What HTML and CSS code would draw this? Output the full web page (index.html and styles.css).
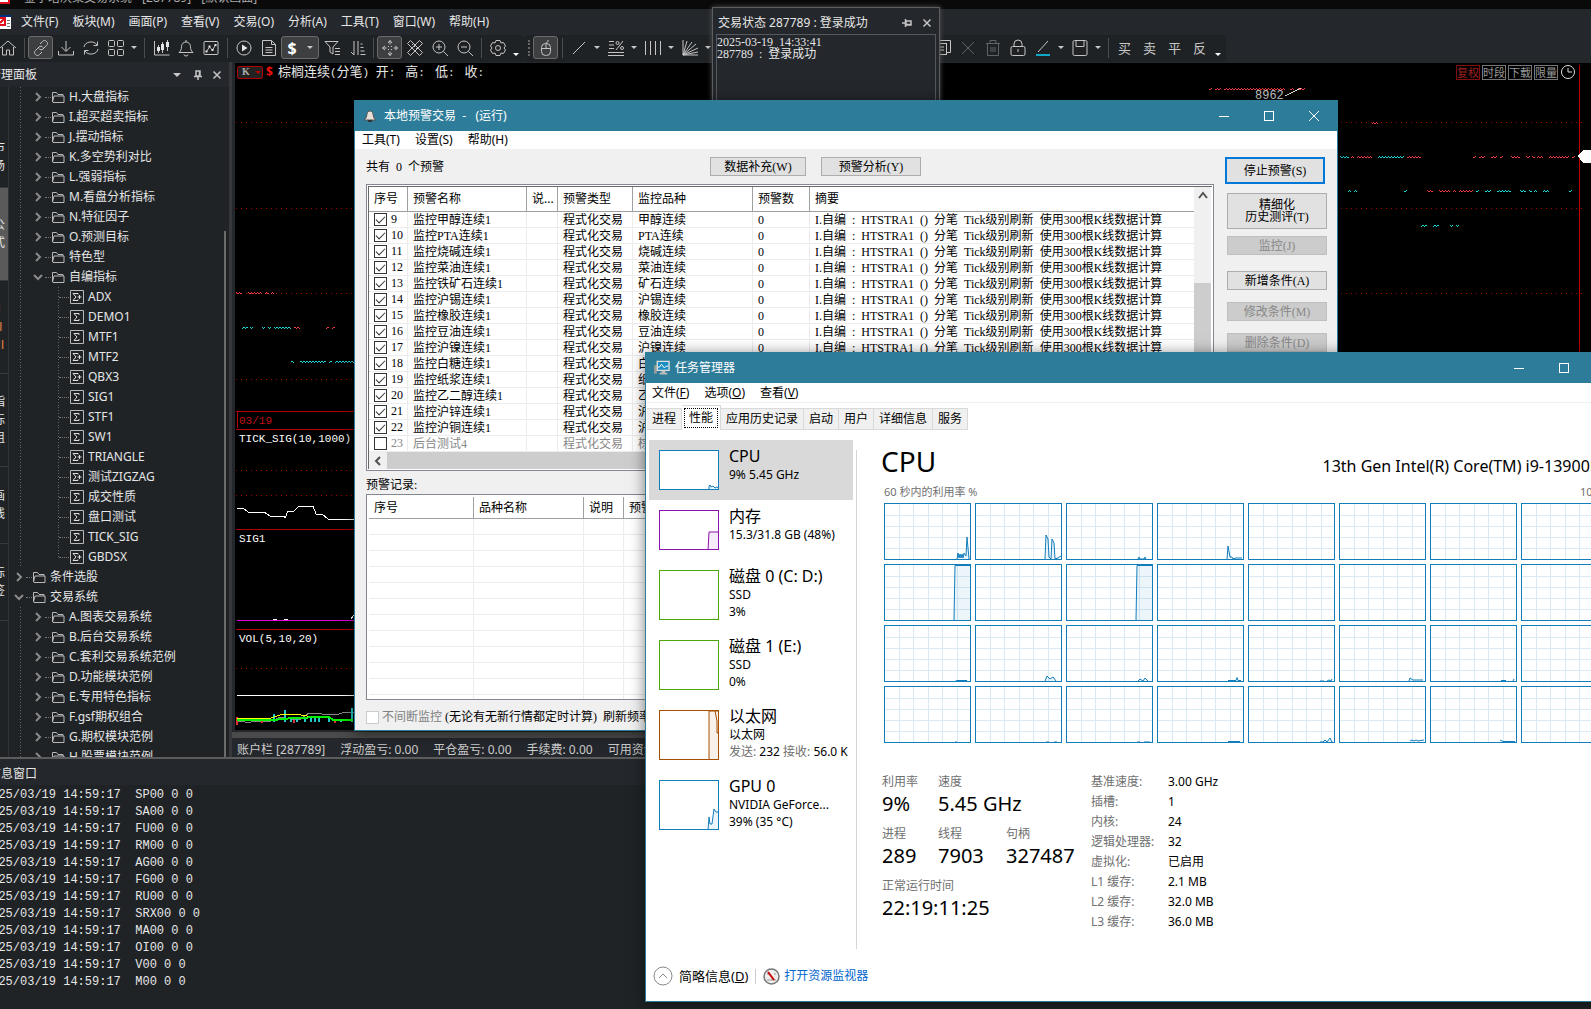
FILE: index.html
```html
<!DOCTYPE html>
<html lang="zh-CN">

<head>
    <meta charset="UTF-8">
    <meta name="viewport" content="width=device-width, initial-scale=1.0">
    <title>本地预警交易</title>
    <link rel="stylesheet" href="styles.css">
</head>

<body>
    <!-- icon sprite -->
    <svg class="sprite" aria-hidden="true">
        <symbol id="home" viewBox="0 0 18 18"><path d="M1 9 9 2l8 7M3.500 8v8h4v-5h3v5h4V8" /></symbol>
        <symbol id="link" viewBox="0 0 18 18"><path d="M8 5l2.500-2.500a2.500 2.500 0 0 1 4 0 2.500 2.500 0 0 1 0 4L11 10a2.500 2.500 0 0 1-4-.5M10 13l-2.500 2.500a2.500 2.500 0 0 1-4 0 2.500 2.500 0 0 1 0-4L7 8a2.500 2.500 0 0 1 4 .5" /></symbol>
        <symbol id="download" viewBox="0 0 18 18"><path d="M9 2v10M4.500 8 9 12.500 13.500 8M1.500 12v4h15v-4" /></symbol>
        <symbol id="refresh" viewBox="0 0 18 18"><path d="M2 8a7 6 0 0 1 13-2M15.500 2.500V6.500H11.500M16 10a7 6 0 0 1-13 2M2.500 15.500V11.500h4" /></symbol>
        <symbol id="grid" viewBox="0 0 18 18"><rect x="1.500" y="1.500" width="6" height="6" rx="1" /><rect x="10.500" y="1.500" width="6" height="6" rx="1" /><rect x="1.500" y="10.500" width="6" height="6" rx="1" /><rect x="10.500" y="10.500" width="6" height="6" rx="1" /></symbol>
        <symbol id="candle" viewBox="0 0 18 18"><path d="M2.500 2v14h15M6.500 6v8M10.500 3v11M15.500 1v11" /><path class="solid" d="M5 8h3v4H5zM9 5h3v6H9zM14 3h3v5h-3z" /></symbol>
        <symbol id="bell" viewBox="0 0 18 18"><path d="M2 13.500h14c-2-2-2.500-3-2.500-6a4.500 4.500 0 0 0-9 0c0 3-.5 4-2.500 6zM7 15.500a2 1.500 0 0 0 4 0M9 1v2" /></symbol>
        <symbol id="chart" viewBox="0 0 18 18"><rect x="2" y="2.500" width="14" height="13" rx="1" /><path d="M4.500 12.500 7.500 8l3 3L13.500 6" /><path class="solid" d="M6.500 6.500h2v2h-2zM9.500 10h2v2h-2zM12.500 5h2v2h-2zM3.500 11.500h2v2h-2z" /></symbol>
        <symbol id="play" viewBox="0 0 18 18"><circle cx="9" cy="9" r="7" /><path class="solid" d="M7 5.500 12.500 9 7 12.500z" /></symbol>
        <symbol id="doc" viewBox="0 0 18 18"><path d="M2.500 1.500h9l4 4v11h-13zM11.500 1.500v4h4M5.500 8.500h7M5.500 11h7M5.500 13.500h7" /></symbol>
        <symbol id="filter" viewBox="0 0 18 18"><path d="M2 2.500h13L10 8v7l-3-2V8zM12 9.500h5M12 12.500h5M12 15.500h5" /></symbol>
        <symbol id="sort" viewBox="0 0 18 18"><path d="M6 2v14L3 13M10 16V2M12.500 5h2M12.500 8.500h3M12.500 12h4M12.500 15.500h5" /></symbol>
        <symbol id="move" viewBox="0 0 18 18"><path d="M9 1.500v4M9 12.500v4M1.500 9h4M12.500 9h4M7 4l2-2.500L11 4M7 14l2 2.500 2-2.500M4 7 1.500 9 4 11M14 7l2.500 2L14 11M7 7l1 1M11 7l-1 1M7 11l1-1M11 11l-1-1" /></symbol>
        <symbol id="tools" viewBox="0 0 18 18"><path d="M4.500 1.500 16.500 13.500l-3 3L1.500 4.500zM13.500 1.500l3 3-12 12-3-3zM6 6l1.500-1.500M8 8l1.500-1.500M10 10l1.500-1.500" /></symbol>
        <symbol id="zoomin" viewBox="0 0 18 18"><circle cx="8" cy="8" r="6" /><path d="M12.500 12.500 17 17M5 8h6M8 5v6" /></symbol>
        <symbol id="zoomout" viewBox="0 0 18 18"><circle cx="8" cy="8" r="6" /><path d="M12.500 12.500 17 17M5 8h6" /></symbol>
        <symbol id="gear" viewBox="0 0 18 18"><circle cx="9" cy="9" r="2.500" /><path d="M7 1.500h4l1 2.500 2.500-.5 2 3.500-1.500 2 1.500 2-2 3.500L12 14l-1 2.500H7L6 14l-2.500.5-2-3.500L3 9 1.500 7l2-3.500L6 4z" /></symbol>
        <symbol id="mouse" viewBox="0 0 18 18"><rect x="4.500" y="4.500" width="9" height="12" rx="4" /><path d="M4.500 9.500h9M9 5v4.500M9 5c0-3 3-1 2-4" /></symbol>
        <symbol id="line" viewBox="0 0 18 18"><path d="M3 15 15 3" /></symbol>
        <symbol id="fib" viewBox="0 0 18 18"><path d="M2 2.500h5M2 6h5M2 9.500h5M1 13.500h16M1 16.500h16M16 2 9 11" /><circle cx="10.500" cy="4" r="1.500" /><circle cx="15" cy="9" r="1.500" /></symbol>
        <symbol id="bars" viewBox="0 0 18 18"><path d="M1.500 2v14M6.500 2v14M11.500 2v14M16.500 2v14" /></symbol>
        <symbol id="fan" viewBox="0 0 18 18"><path d="M2 1v15h15M2 16 6 2M2 16 11 3M2 16 15 5M2 16 17 9M2 16l15-3" /></symbol>
        <symbol id="copy" viewBox="0 0 18 18"><rect x="1.500" y="4.500" width="11" height="11" /><path d="M5 4.500v-3h11.500v12H12.500M4 8h6M4 11h6" /></symbol>
        <symbol id="cross" viewBox="0 0 18 18"><path d="M3 3l12 12M15 3 3 15" /></symbol>
        <symbol id="trash" viewBox="0 0 18 18"><path d="M2 4.500h14M6 4.500v-3h6v3M3.500 4.500v12h11v-12M7 8v5M9 8v5M11 8v5" /></symbol>
        <symbol id="lock" viewBox="0 0 18 18"><rect x="2" y="7.500" width="14" height="9" rx="1.500" /><path d="M5 7.500V5a4 4 0 0 1 8 0v2.500M9 10v3" /></symbol>
        <symbol id="pen" viewBox="0 0 18 18"><path d="M4 13 14 2" /><path class="cyan" d="M2 16h14" /></symbol>
        <symbol id="save" viewBox="0 0 18 18"><rect x="2" y="1.500" width="14" height="15" rx="1.500" /><path d="M5 1.500v6h8v-6" /></symbol>
        <symbol id="pin" viewBox="0 0 10 10"><path d="M3 1h4v5H3zM1 6.500h8M5 6.500V10M6.500 1v5" /></symbol>
        <symbol id="close" viewBox="0 0 10 10"><path d="M1.500 1.500l7 7M8.500 1.500l-7 7" /></symbol>
        <symbol id="folder" viewBox="0 0 14 14"><path d="M1.500 12V2.500h4l1.500 2h5V6M1.500 12l1.500-6h10v6.500H2z" /></symbol>
        <symbol id="sigma" viewBox="0 0 14 14"><path d="M.5.5h13v13H.5z" /><path class="sig" d="M9 5V3.500H4L7 7l-3 3.500h5V9" /></symbol>
        <symbol id="sigmaplus" viewBox="0 0 14 14"><path d="M.5.5h13v13H.5z" /><path class="sig" d="M8 4.500V3.500H3L6 7l-3 3.500h5v-1M7.500 7h4M9.500 5v4" /></symbol>
        <symbol id="right" viewBox="0 0 10 10"><path d="M3 1l4 4-4 4" /></symbol>
        <symbol id="down" viewBox="0 0 10 10"><path d="M1 3l4 4 4-4" /></symbol>
    </svg>

    <div class="app">
        <header class="titlebar">
            <span class="logo"></span>
            <span class="app-title">金字塔决策交易系统 - [287789] - [默认画面]</span>
        </header>
        <nav class="menubar">
            <svg class="doc-icon" width="11" height="14" viewBox="0 0 11 14"><path fill="#fff" d="M0 0h11v14H0z" /><path fill="#003080" d="M0 0h11v2H0z" /><path fill="none" stroke="#e01020" stroke-width="2" d="M0 3h5v7H0M0 8l4-4" /><path stroke="#777" d="M7 5.500h3M7 8.500h3M7 11.500h3" /></svg>
            <a href="#">文件(F)</a><a href="#">板块(M)</a><a href="#">画面(P)</a><a href="#">查看(V)</a><a href="#">交易(O)</a><a href="#">分析(A)</a><a href="#">工具(T)</a><a href="#">窗口(W)</a><a href="#">帮助(H)</a>
        </nav>
        <div class="toolbar" id="toolbar"></div>

        <div class="main">
            <aside class="panel">
                <div class="panel-head">
                    <span class="panel-title">管理面板</span>
                    <i class="caret large"></i>
                    <svg class="ico small"><use href="#pin" /></svg>
                    <svg class="ico small"><use href="#close" /></svg>
                </div>
                <div class="panel-body">
                    <div class="strip">
                        <div class="strip-tab t1"><span>市场</span></div>
                        <div class="strip-tab t2 on"><span>公式</span></div>
                        <div class="strip-tab t2 hot"><span>ⅠⅡⅢ</span></div>
                        <div class="strip-tab t2"><span>指标组</span></div>
                        <div class="strip-tab t3"><span>画线</span></div>
                        <div class="strip-tab t3"><span>标签</span></div>
                    </div>
                    <ul class="tree" id="tree"></ul>
                    <div class="tree-scroll"><div class="tree-thumb"></div></div>
                </div>
            </aside>

            <section class="view">
                <div class="chart">
                    <svg class="plot" id="plot">
                        <defs>
                            <pattern id="zr" width="3" height="2" patternUnits="userSpaceOnUse"><path d="M0 0h1v1H0zM1 1h1v1H1zM2 0h1v1H2z" fill="#f03c3c" /></pattern>
                            <pattern id="zc" width="3" height="2" patternUnits="userSpaceOnUse"><path d="M0 0h1v1H0zM1 1h1v1H1zM2 0h1v1H2z" fill="#20d8d8" /></pattern>
                        </defs>
                    </svg>
                    <div class="chart-head">
                        <span class="kbox"><b>K</b><i></i></span>
                        <span class="dollar">$</span>
                        <span class="sim13">棕榈连续<span class="en13">(</span>分笔<span class="en13">) </span>开<span class="en13">: </span> 高<span class="en13">: </span> 低<span class="en13">: </span> 收<span class="en13">:</span></span>
                        <span class="tags"><b class="red">复权</b><b>时段</b><b>下载</b><b>限量</b><svg width="16" height="16"><circle cx="8" cy="8" r="6.500" /><path d="M8 4v4h4" /></svg></span>
                    </div>
                </div>
                <div class="hbar"></div>
                <div class="status"><span>账户栏 [287789]</span><span>浮动盈亏: 0.00</span><span>平仓盈亏: 0.00</span><span>手续费: 0.00</span><span>可用资金: 0.00</span></div>
            </section>
        </div>

        <section class="message">
            <div class="message-head"><span>信息窗口</span></div>
            <div class="log" id="log"></div>
        </section>
    </div>

    <!-- trade state popup -->
    <div class="popup">
        <div class="popup-head">
            <span>交易状态 287789 : 登录成功</span>
            <svg class="ico small turn"><use href="#pin" /></svg>
            <svg class="ico small"><use href="#close" /></svg>
        </div>
        <div class="popup-body">
            <div class="sim">2025-03-19 14:33:41</div>
            <div class="sim">287789 : 登录成功</div>
        </div>
    </div>

    <!-- alert dialog -->
    <div class="win alert">
        <div class="win-title">
            <svg width="16" height="14" viewBox="0 0 16 14"><path fill="#e8e0d8" stroke="#555" d="M1 11c2-1 2.500-3 3-6 .5-4 5.500-4 6 0 .5 3 1 5 3 6z" /><path fill="#333" d="M5 11h4v2H5z" /></svg>
            <span>本地预警交易 &nbsp;- &nbsp;&nbsp;(运行)</span>
            <div class="caption"><button aria-label="最小化"><i class="min"></i></button><button aria-label="最大化"><i class="max"></i></button><button aria-label="关闭"><svg width="12" height="12"><path d="M1 1l10 10M11 1 1 11" /></svg></button></div>
        </div>
        <nav class="win-menu"><a href="#">工具(T)</a><a href="#">设置(S)</a><a href="#">帮助(H)</a></nav>
        <div class="alert-body">
            <div class="alert-left">
                <div class="alert-top">
                    <span class="sim count">共有 0 个预警</span>
                    <button class="btn sim w">数据补充(W)</button>
                    <button class="btn sim">预警分析(Y)</button>
                </div>
                <div class="list">
                    <div class="list-row">
                        <table class="grid rules">
                            <colgroup><col class="c1"><col class="c2"><col class="c3"><col class="c4"><col class="c5"><col class="c6"><col></colgroup>
                            <thead><tr><th>序号</th><th>预警名称</th><th>说...</th><th>预警类型</th><th>监控品种</th><th>预警数</th><th>摘要</th></tr></thead>
                            <tbody id="rules"></tbody>
                        </table>
                        <div class="vscroll"><svg width="10" height="10"><path d="M1 7l4-5 4 5" /></svg><div class="vthumb"></div></div>
                    </div>
                    <div class="hscroll"><svg width="10" height="10"><path d="M7 1 3 5l4 4" /></svg><div class="hthumb"></div></div>
                </div>
                <div class="sim record-label">预警记录:</div>
                <div class="list single">
                    <table class="grid">
                        <colgroup><col class="r1"><col class="r2"><col class="r3"><col></colgroup>
                        <thead><tr><th>序号</th><th>品种名称</th><th>说明</th><th>预警时间</th></tr></thead>
                        <tbody id="records"></tbody>
                    </table>
                </div>
                <div class="keep"><input type="checkbox" id="keep" disabled><label for="keep">不间断监控</label><span class="sim">(无论有无新行情都定时计算) 刷新频率</span></div>
            </div>
            <div class="side">
                <button class="btn sim primary">停止预警(S)</button>
                <button class="btn tall"><span class="sim">精细化</span><br><span class="sim">历史测评(T)</span></button>
                <button class="btn sim" disabled>监控(J)</button>
                <button class="btn sim add">新增条件(A)</button>
                <button class="btn sim edit" disabled>修改条件(M)</button>
                <button class="btn sim edit" disabled>删除条件(D)</button>
            </div>
        </div>
    </div>

    <!-- task manager -->
    <div class="win task">
        <div class="win-title">
            <svg width="16" height="16" viewBox="0 0 17 16"><path fill="#999" d="M0 5h3v9H0z" /><path fill="#5c5" d="M1 6h1v1H1z" /><path fill="#1b8fc4" stroke="#ddd" stroke-width="1.500" d="M3.500 1h12.500v9.500H3.500z" /><path fill="none" stroke="#fff" d="M4 7h2l2-3 3 4 2-2h2" /><path fill="#bbb" d="M8 11h4v2h2v2H6v-2h2z" /></svg>
            <span>任务管理器</span>
            <div class="caption"><button aria-label="最小化"><i class="min"></i></button><button aria-label="最大化"><i class="max"></i></button><button aria-label="关闭"><svg width="12" height="12"><path d="M1 1l10 10M11 1 1 11" /></svg></button></div>
        </div>
        <nav class="win-menu"><a href="#">文件(<u>F</u>)</a><a href="#">选项(<u>O</u>)</a><a href="#">查看(<u>V</u>)</a></nav>
        <div class="tabs"><button>进程</button><button class="on"><span>性能</span></button><button>应用历史记录</button><button>启动</button><button>用户</button><button>详细信息</button><button>服务</button></div>
        <div class="task-body">
            <ul class="devices">
                <li class="on"><svg class="thumb blue"><path d="M49 39v-4l1-1 1 2 2-1 2 2 2-1 2 1v2z" /></svg><div><h4>CPU</h4><p>9% 5.45 GHz</p></div></li>
                <li><svg class="thumb purple"><path d="M48 39 49 21h10v18z" /></svg><div><h4>内存</h4><p>15.3/31.8 GB (48%)</p></div></li>
                <li class="tallrow"><svg class="thumb green"><path d="M52 49l2-1 2 1 2-1" /></svg><div><h4>磁盘 0 (C: D:)</h4><p>SSD</p><p>3%</p></div></li>
                <li class="tallrow"><svg class="thumb green"></svg><div><h4>磁盘 1 (E:)</h4><p>SSD</p><p>0%</p></div></li>
                <li class="tallrow"><svg class="thumb orange"><path d="M49 49V0h10v49z" /><path d="M55 0l2 10v12h2" /></svg><div><h4>以太网</h4><p>以太网</p><p><em>发送:</em> 232 <em>接收:</em> 56.0 K</p></div></li>
                <li class="tallrow"><svg class="thumb blue"><path d="M48 49l1-13 1 7h2l2-15 2 3h3v18z" /></svg><div><h4>GPU 0</h4><p>NVIDIA GeForce...</p><p>39% (35 °C)</p></div></li>
            </ul>
            <section class="detail">
                <div class="detail-head"><h1>CPU</h1><span>13th Gen Intel(R) Core(TM) i9-13900KF</span></div>
                <div class="detail-sub"><span>60 秒内的利用率 %</span><span>100%</span></div>
                <div class="cores" id="cores"></div>
                <div class="stats">
                    <div class="figures">
                        <dl><dt>利用率</dt><dd>9%</dd></dl><dl class="wide"><dt>速度</dt><dd>5.45 GHz</dd></dl>
                        <dl><dt>进程</dt><dd>289</dd></dl><dl><dt>线程</dt><dd>7903</dd></dl><dl><dt>句柄</dt><dd>327487</dd></dl>
                        <dl class="whole"><dt>正常运行时间</dt><dd>22:19:11:25</dd></dl>
                    </div>
                    <dl class="specs">
                        <dt>基准速度:</dt><dd>3.00 GHz</dd>
                        <dt>插槽:</dt><dd>1</dd>
                        <dt>内核:</dt><dd>24</dd>
                        <dt>逻辑处理器:</dt><dd>32</dd>
                        <dt>虚拟化:</dt><dd>已启用</dd>
                        <dt>L1 缓存:</dt><dd>2.1 MB</dd>
                        <dt>L2 缓存:</dt><dd>32.0 MB</dd>
                        <dt>L3 缓存:</dt><dd>36.0 MB</dd>
                    </dl>
                </div>
            </section>
        </div>
        <footer class="task-foot">
            <button class="less"><svg width="20" height="20"><circle cx="10" cy="10" r="9" /><path d="M6 12l4-4 4 4" /></svg>简略信息(<u>D</u>)</button>
            <span class="bar"></span>
            <svg width="17" height="17" viewBox="0 0 17 17"><circle cx="8.500" cy="8.500" r="7.500" fill="#eee" stroke="#777" stroke-width="1.500" /><path stroke="#999" d="M4 6h2M11 6h2M4 12h9" /><path stroke="#c00" stroke-width="2" d="M5 4l6 8" /></svg>
            <a href="#">打开资源监视器</a>
        </footer>
    </div>

    <script src="script.js"></script>
</body>

</html>
```
FILE: styles.css
```css
* {
    box-sizing: border-box;
}

body {
    margin: 0;
    height: 100vh;
    overflow: hidden;
    position: relative;
    background: #1d1f22;
    font-family: "Noto Sans", "Noto Sans CJK SC", sans-serif;
    font-size: 12px;
    line-height: 16px;
    color: #e6e6e6;
}

ul, dl, dd, h1, h4, p {
    margin: 0;
    padding: 0;
    list-style: none;
    font-weight: normal;
}

a {
    color: inherit;
    text-decoration: none;
}

button {
    font: inherit;
    color: inherit;
    background: none;
    border: 0;
    padding: 0;
}

em {
    font-style: normal;
    color: #707070;
}

.sprite {
    display: none;
}

/* song style text */
.sim {
    font-size: 12px;
}

.en {
    font-family: "Liberation Serif", serif;
    line-height: 1px;
    white-space: pre;
}

.sim13 {
    font-size: 13px;
    white-space: pre;
}

.en13 {
    font-family: "Liberation Mono", monospace;
    font-size: 11px;
}

.ico {
    width: 18px;
    height: 18px;
    fill: none;
    stroke: #c4c4c4;
    flex: none;
}

.ico.small {
    width: 10px;
    height: 10px;
    stroke-width: 1.5;
}

.turn {
    transform: rotate(90deg);
}

.solid {
    fill: #e6e6e6;
    stroke: none;
}

.cyan {
    stroke: #10a8c8;
    stroke-width: 2;
}

/* Main application */
.app {
    height: 100vh;
    display: flex;
    flex-direction: column;
    background: #24272c;
}

.titlebar {
    height: 9px;
    flex: none;
    background: #0a0a0a;
    display: flex;
    align-items: flex-end;
    overflow: hidden;
    padding-bottom: 5px;
    gap: 14px;
}

.logo {
    width: 10px;
    height: 12px;
    background: #fff;
    border: 2px solid #e01020;
    border-left: 0;
}

.app-title {
    line-height: 12px;
    font-size: 12px;
    color: #aaa;
}

.menubar {
    height: 26px;
    flex: none;
    display: flex;
    align-items: center;
}

.menubar a {
    margin-left: 14px;
}

.doc-icon {
    margin-right: -4px;
}

.toolbar {
    height: 27px;
    flex: none;
    display: flex;
    align-items: center;
    margin-left: -5px;
}

.group {
    display: flex;
    align-items: center;
    height: 27px;
    background: #1f2225;
    border-radius: 4px;
    padding: 0 2px 2px 0;
}

.tool {
    width: 25px;
    height: 23px;
    display: flex;
    align-items: center;
    justify-content: center;
    font-size: 13px;
    color: #c8c8c8;
}

.tool.on {
    background: #3e3f40;
    border: 1px solid #6c6c6c;
    border-radius: 3px;
}

.tool.money {
    width: 38px;
    gap: 10px;
    font-size: 16px;
    font-weight: bold;
    color: #fff;
}

.tool.dim {
    opacity: 0.4;
}

.sep {
    width: 1px;
    height: 20px;
    background: #4a4d50;
    margin: 0 3px 0 4px;
}

.grip {
    border-left: 2px dotted #666;
    height: 16px;
    margin: 0 3px 0 4px;
}

.caret {
    border: 3px solid transparent;
    border-top: 3px solid #c8c8c8;
    border-bottom: 0;
    margin: 0 3px;
}

.caret.low {
    margin-top: 14px;
    border-top-color: #fff;
}

.caret.large {
    border-width: 4px 4px 0;
}

.tool .caret {
    margin: 0;
}

.tool-space {
    width: 216px;
}

.main {
    flex: 1;
    min-height: 0;
    display: flex;
}

.panel {
    width: 229px;
    flex: none;
    display: flex;
    flex-direction: column;
}

.panel-head {
    height: 25px;
    flex: none;
    display: flex;
    align-items: center;
    gap: 9px;
    padding-right: 7px;
}

.panel-title {
    margin-left: -11px;
    margin-right: auto;
}

.panel-body {
    flex: 1;
    min-height: 0;
    display: flex;
    background: #1f2326;
}

.strip {
    width: 9px;
    overflow: hidden;
    border-right: 1px solid #303337;
    padding-top: 40px;
    flex: none;
}

.strip-tab {
    height: 93px;
    border-bottom: 1px solid #36393d;
    display: flex;
    align-items: center;
    line-height: 18px;
}

.strip-tab span {
    width: 12px;
    flex: none;
    margin-left: -7px;
    word-break: break-all;
}

.strip-tab.t1 {
    height: 61px;
}

.strip-tab.t3 {
    height: 77px;
}

.strip-tab.on {
    background: #5a5a5a;
}

.strip-tab.hot {
    color: #e08040;
}

.tree {
    flex: 1;
    overflow: hidden;
    padding-left: 5px;
}

.tree li {
    height: 20px;
    display: flex;
    align-items: center;
    gap: 4px;
    white-space: nowrap;
}

.tree li svg {
    width: 14px;
    height: 14px;
    fill: none;
    stroke: #b8b8b8;
    flex: none;
}

.tree li .arrow {
    width: 10px;
    height: 10px;
    stroke: #8a8a8a;
    stroke-width: 2;
}

.tree .dots {
    width: 6px;
    border-top: 1px dotted #777;
    margin: 0 -4px 0 -2px;
}

.sig {
    stroke: #ddd;
}

.lv2 {
    padding-left: 19px;
    background: repeating-linear-gradient(#666 0 1px, transparent 1px 3px) 6px 0 / 1px 100% no-repeat;
}

.lv3 {
    padding-left: 45px;
    background:
        repeating-linear-gradient(#666 0 1px, transparent 1px 3px) 6px 0 / 1px 100% no-repeat,
        repeating-linear-gradient(#666 0 1px, transparent 1px 3px) 44px 0 / 1px 100% no-repeat;
}

.lv3:has(+ .lv1) {
    background:
        repeating-linear-gradient(#666 0 1px, transparent 1px 3px) 6px 0 / 1px 100% no-repeat,
        repeating-linear-gradient(#666 0 1px, transparent 1px 3px) 44px 0 / 1px 50% no-repeat;
}

.lv3 .dots {
    width: 10px;
    margin: 0 -3px 0 0;
}

.tree-scroll {
    width: 5px;
    display: flex;
    padding-top: 144px;
}

.tree-thumb {
    width: 2px;
    background: #6b6b6b;
}

.view {
    flex: 1;
    min-width: 0;
    display: flex;
    flex-direction: column;
    border-left: 3px solid #36383b;
    padding: 1px 0 0 3px;
}

.chart {
    flex: 1;
    background: #000;
    position: relative;
    overflow: hidden;
}

.plot {
    position: absolute;
    inset: 0;
    width: 100%;
    height: 100%;
    fill: none;
    shape-rendering: crispEdges;
    font-family: "Liberation Mono", monospace;
    font-size: 11px;
}

.chart-head {
    position: relative;
    display: flex;
    align-items: center;
    height: 18px;
    padding-left: 2px;
}

.kbox {
    display: flex;
    align-items: center;
    width: 26px;
    height: 13px;
    border: 1px solid #b00000;
    border-radius: 2px;
    background: #222;
    font-family: "Liberation Serif", serif;
    font-size: 10px;
    color: #aaa;
    padding-left: 4px;
}

.kbox i {
    border: 3px solid transparent;
    border-top-color: #b00000;
    border-bottom: 0;
    margin-left: 5px;
}

.dollar {
    color: #f01010;
    font-weight: bold;
    padding: 0 5px 0 3px;
}

.tags {
    margin-left: auto;
    margin-right: 15px;
    display: flex;
    align-items: center;
    gap: 2px;
    fill: none;
    stroke: #ddd;
}

.tags b {
    border: 1px solid #777;
    width: 24px;
    height: 15px;
    font-size: 11px;
    line-height: 13px;
    font-weight: normal;
    text-align: center;
    color: #999;
}

.tags b.red {
    color: #a02020;
    border-color: #801010;
}

.hbar {
    height: 6px;
    margin: 2px 0 0 -3px;
    background: #4a4a4a;
}

.status {
    height: 19px;
    flex: none;
    display: flex;
    align-items: center;
    gap: 15px;
    padding: 5px 0 0 2px;
    color: #ccc;
}

.message {
    height: 252px;
    flex: none;
    border-top: 2px solid #5c5c5c;
    background: #1f2326;
    overflow: hidden;
}

.message-head {
    height: 26px;
    background: #24272c;
    padding-top: 7px;
}

.message-head span {
    margin-left: -11px;
}

.log {
    font-family: "Liberation Mono", monospace;
    line-height: 17px;
    white-space: pre;
    margin-left: -16px;
    padding-top: 2px;
}

/* Popup */
.popup {
    position: absolute;
    left: 712px;
    top: 7px;
    width: 228px;
    height: 110px;
    background: #24272c;
    border: 1px solid #5e5e5e;
    box-shadow: 0 0 5px #555;
    padding: 0 3px;
    display: flex;
    flex-direction: column;
}

.popup-head {
    height: 26px;
    display: flex;
    align-items: center;
    gap: 10px;
    padding: 4px 4px 0 2px;
}

.popup-head span {
    margin-right: auto;
}

.popup-body {
    flex: 1;
    border: 1px solid #55585c;
    line-height: 12px;
    padding-top: 1px;
}

/* Windows */
.win {
    position: absolute;
    border: 1px solid #2d7d9a;
    color: #000;
    display: flex;
    flex-direction: column;
    box-shadow: 0 2px 14px rgba(0, 0, 0, 0.5);
}

.win-title {
    height: 30px;
    flex: none;
    background: #2d7d9a;
    color: #fff;
    display: flex;
    align-items: center;
    gap: 5px;
    padding: 0 1px 0 8px;
}

.caption {
    margin-left: auto;
    display: flex;
}

.caption button {
    width: 45px;
    height: 30px;
    display: flex;
    align-items: center;
    justify-content: center;
}

.caption svg {
    stroke: #fff;
}

.min {
    width: 10px;
    height: 1px;
    background: #fff;
}

.max {
    width: 10px;
    height: 10px;
    border: 1px solid #fff;
}

.win-menu {
    height: 18px;
    flex: none;
    background: #fff;
    display: flex;
    gap: 15px;
    padding: 1px 0 0 7px;
}

.alert {
    left: 354px;
    top: 100px;
    width: 984px;
    background: #f0f0f0;
}

.alert-body {
    display: flex;
    padding: 8px 10px 6px 11px;
    gap: 11px;
}

.alert-left {
    flex: 1;
    min-width: 0;
}

.alert-top {
    display: flex;
    height: 27px;
    gap: 15px;
}

.count {
    width: 329px;
    line-height: 20px;
}

.btn {
    height: 19px;
    width: 100px;
    border: 1px solid #adadad;
    background: #e1e1e1;
    line-height: 17px;
    white-space: nowrap;
}

.btn.w {
    width: 96px;
}

.btn:disabled {
    background: #ccc;
    border-color: #bfbfbf;
    color: #888;
}

.list {
    border: 1px solid #828790;
    box-shadow: inset 0 0 0 1px #fff, inset 2px 2px 0 #696969;
    padding: 2px;
    background: #fff;
    height: 287px;
}

.list.single {
    height: 206px;
    box-shadow: none;
    overflow: hidden;
}

.list-row {
    display: flex;
}

.grid {
    flex: 1;
    width: 100%;
    table-layout: fixed;
    border-collapse: separate;
    border-spacing: 0;
}

.grid th {
    height: 25px;
    padding: 0 0 0 5px;
    font-weight: normal;
    text-align: left;
    border-right: 1px solid #a0a0a0;
    border-bottom: 1px solid #a0a0a0;
    white-space: nowrap;
}

.grid td {
    height: 16px;
    padding: 0 0 0 5px;
    line-height: 15px;
    border-right: 1px solid #ececec;
    border-bottom: 1px solid #ececec;
    white-space: nowrap;
    overflow: hidden;
}

.grid th:last-child,
.grid td:last-child {
    border-right: 0;
}

.single th {
    height: 22px;
}

.rules td:first-child > label {
    display: flex;
    align-items: center;
    gap: 4px;
    height: 15px;
}

.off {
    color: #888;
}

.c1 { width: 39px; }
.c2 { width: 119px; }
.c3 { width: 31px; }
.c4 { width: 75px; }
.c5 { width: 120px; }
.c6 { width: 57px; }
.r1 { width: 105px; }
.r2 { width: 110px; }
.r3 { width: 40px; }

input[type="checkbox"] {
    appearance: none;
    width: 13px;
    height: 13px;
    margin: 0;
    border: 1px solid #333;
    background: #fff;
    flex: none;
}

input[type="checkbox"]:checked::after {
    content: "";
    display: block;
    width: 8px;
    height: 4px;
    margin: 2px 1px;
    border-left: 1px solid #333;
    border-bottom: 1px solid #333;
    transform: rotate(-45deg);
}

input[type="checkbox"]:disabled {
    border-color: #ccc;
}

.vscroll {
    width: 17px;
    background: #f0f0f0;
    display: flex;
    flex-direction: column;
    align-items: center;
    padding-top: 4px;
    gap: 82px;
}

.vscroll svg,
.hscroll svg {
    fill: none;
    stroke: #505050;
    stroke-width: 2;
    flex: none;
}

.vthumb {
    flex: 1;
    width: 17px;
    background: #cdcdcd;
}

.hscroll {
    height: 17px;
    background: #f0f0f0;
    display: flex;
    align-items: center;
    padding-left: 4px;
    gap: 4px;
    margin-right: 17px;
}

.hthumb {
    width: 600px;
    height: 17px;
    background: #cdcdcd;
}

.record-label {
    height: 23px;
    line-height: 27px;
}

.keep {
    display: flex;
    align-items: center;
    padding-top: 10px;
    height: 24px;
    gap: 3px;
    white-space: nowrap;
}

.keep label {
    color: #808080;
}

.side {
    width: 102px;
    flex: none;
    display: flex;
    flex-direction: column;
    align-items: flex-end;
}

.btn.primary {
    width: 100px;
    height: 27px;
    border: 2px solid #0078d7;
    margin: 0 2px 9px 0;
}

.btn.tall {
    height: 36px;
    line-height: 12px;
    margin-bottom: 7px;
}

.btn.add {
    margin: 16px 0 12px;
}

.btn.edit {
    margin-bottom: 12px;
}

/* Task manager */
.task {
    left: 645px;
    top: 352px;
    width: 988px;
    height: 650px;
    background: #fff;
}

.task .win-menu {
    padding: 2px 0 0 6px;
    height: 20px;
    border-bottom: 1px solid #f0f0f0;
}

.tabs {
    display: flex;
    align-items: flex-end;
    height: 27px;
    flex: none;
    padding-left: 1px;
    margin-bottom: 10px;
}

.tabs button {
    height: 22px;
    padding: 0 5px;
    background: #f0f0f0;
    border: 1px solid #d9d9d9;
    border-left: 0;
}

.tabs .on {
    height: 25px;
    background: #fff;
    padding: 0 2px;
    border-bottom: 0;
}

.tabs .on span {
    display: block;
    border: 1px dotted #000;
    padding: 1px 4px;
}

.task-body {
    flex: 1;
    display: flex;
    padding-left: 3px;
}

.devices {
    width: 208px;
    flex: none;
    margin-bottom: 52px;
    position: relative;
    overflow: hidden;
}

.devices::after {
    content: "";
    position: absolute;
    right: 0;
    top: 10px;
    bottom: 0;
    border-right: 1px solid #d5d5d5;
}

.devices li {
    display: flex;
    gap: 10px;
    height: 60px;
    padding: 7px 0 0 10px;
    width: 204px;
    white-space: nowrap;
}

.devices .tallrow {
    height: 70px;
}

.devices .on {
    background: #d9d9d9;
}

.devices h4 {
    font-size: 16px;
    line-height: 19px;
}

.devices p {
    line-height: 17px;
}

.thumb {
    width: 60px;
    height: 40px;
    flex: none;
    margin-top: 3px;
    border: 1px solid currentColor;
    background: #fff;
    stroke: currentColor;
    fill: currentColor;
    fill-opacity: 0.08;
}

.tallrow .thumb {
    height: 50px;
}

.blue { color: #117dbb; }
.purple { color: #8b12ae; }
.green { color: #4da60c; }
.orange { color: #a74f01; }

.detail {
    padding-left: 24px;
    width: 751px;
    flex: none;
}

.detail-head {
    display: flex;
    justify-content: space-between;
    align-items: baseline;
    height: 44px;
}

.detail-head h1 {
    font-size: 28px;
    line-height: 42px;
}

.detail-head span {
    font-size: 16px;
}

.detail-sub {
    display: flex;
    justify-content: space-between;
    font-size: 11px;
    line-height: 16px;
    color: #707070;
    padding: 0 0 3px 3px;
}

.cores {
    display: grid;
    grid-template-columns: repeat(8, 87px);
    gap: 4px;
    padding-left: 3px;
    margin-bottom: 31px;
}

.cores svg {
    width: 87px;
    height: 57px;
    border: 1px solid #117dbb;
    stroke: #117dbb;
    fill: none;
}

.cores .rule {
    stroke: #d9eaf4;
    shape-rendering: crispEdges;
}

.cores .load {
    fill: #117dbb;
    fill-opacity: 0.08;
}

.stats {
    display: flex;
    gap: 12px;
    padding-left: 1px;
}

.stats dt {
    color: #707070;
}

.figures {
    display: grid;
    grid-template-columns: 56px 68px 73px;
    grid-auto-rows: 52px;
}

.figures .wide {
    grid-column: span 2;
}

.figures .whole {
    grid-column: span 3;
}

.figures dd {
    font-size: 20px;
    line-height: 28px;
}

.specs {
    display: grid;
    grid-template-columns: 77px 100px;
    grid-auto-rows: 20px;
}

.task-foot {
    position: absolute;
    left: 7px;
    bottom: 15px;
    display: flex;
    align-items: center;
    gap: 7px;
}

.less {
    display: flex;
    align-items: center;
    font-size: 13px;
}

.less svg {
    fill: none;
    stroke: #888;
    margin-right: 6px;
}

.bar {
    height: 15px;
    border-left: 1px solid #ccc;
}

.task-foot a {
    color: #0066cc;
    margin-left: -3px;
}
```
FILE: script.js
```js
const icon = name => `<svg class="ico"><use href="#${name}" /></svg>`;

// latin runs are set in serif, with half-em spaces, next to the 12px chinese glyphs
const en = text => text.replace(/[\x20-\x7e]+/g, run => `<span class="en">${run.replace(/ /g, '\u2002')}</span>`);

document.querySelectorAll('.sim').forEach(el => {
    el.innerHTML = en(el.textContent);
});

// toolbar: "|" separator, "v" drop arrow, "_" low arrow, "*" pressed, "-" dimmed
const groups = [
    'home | *link download refresh grid v | candle bell chart | play doc $ filter sort | *move tools zoomin zoomout | gear _',
    ': *mouse | line v fib v bars v fan v ~ copy -cross -trash lock pen v save v | 买 卖 平 反 _'
];

function tool(key) {
    if (key === '|') return '<i class="sep"></i>';
    if (key === ':') return '<i class="grip"></i>';
    if (key === 'v') return '<i class="caret"></i>';
    if (key === '_') return '<i class="caret low"></i>';
    if (key === '~') return '<i class="tool-space"></i>';
    if (key === '$') return '<button class="tool on money">$<i class="caret"></i></button>';
    if (/[买卖平反]/.test(key)) return `<button class="tool">${key}</button>`;
    const name = key.replace(/^[*-]/, '');
    const state = key[0] === '*' ? ' on' : key[0] === '-' ? ' dim' : '';
    return `<button class="tool${state}" aria-label="${name}">${icon(name)}</button>`;
}

document.getElementById('toolbar').innerHTML = groups
    .map(g => `<div class="group">${g.split(' ').map(tool).join('')}</div>`).join('');

// formula tree
const tree = [
    ...['H.大盘指标', 'I.超买超卖指标', 'J.摆动指标', 'K.多空势利对比', 'L.强弱指标', 'M.看盘分析指标', 'N.特征因子', 'O.预测目标', '特色型'].map(t => [2, t]),
    [2, '自编指标', 'open'],
    [3, 'ADX', 'plus'], [3, 'DEMO1'], [3, 'MTF1'], [3, 'MTF2', 'plus'], [3, 'QBX3', 'plus'], [3, 'SIG1'], [3, 'STF1'], [3, 'SW1'],
    [3, 'TRIANGLE', 'plus'], [3, '测试ZIGZAG', 'plus'], [3, '成交性质'], [3, '盘口测试'], [3, 'TICK_SIG'], [3, 'GBDSX', 'plus'],
    [1, '条件选股'], [1, '交易系统', 'open'],
    ...['A.图表交易系统', 'B.后台交易系统', 'C.套利交易系统范例', 'D.功能模块范例', 'E.专用特色指标', 'F.gsf期权组合', 'G.期权模块范例', 'H.股票模块范例'].map(t => [2, t])
];

document.getElementById('tree').innerHTML = tree.map(([level, text, flag]) => {
    if (level === 3) {
        return `<li class="lv3"><i class="dots"></i><svg><use href="#${flag ? 'sigmaplus' : 'sigma'}" /></svg>${text}</li>`;
    }
    return `<li class="lv${level}"><svg class="arrow"><use href="#${flag ? 'down' : 'right'}" /></svg><i class="dots"></i><svg><use href="#folder" /></svg>${text}</li>`;
}).join('');

// alert rules
const rules = [
    ['甲醇'], ['PTA'], ['烧碱'], ['菜油'], ['铁矿石', '矿石'], ['沪锡'], ['橡胶'], ['豆油'], ['沪镍'],
    ['白糖'], ['纸浆'], ['乙二醇'], ['沪锌'], ['沪铜']
].map(([name, kind]) => [`监控${name}连续1`, `${kind || name}连续`]);
rules.push(['后台测试4', '棕榈连续']);

document.getElementById('rules').innerHTML = rules.map(([name, kind], i) => {
    const on = i < rules.length - 1;
    return `<tr class="${on ? '' : 'off'}"><td><label><input type="checkbox"${on ? ' checked' : ''}>${en(String(i + 9))}</label></td>
        <td>${en(name)}</td><td></td><td>程式化交易</td><td>${en(kind)}</td><td>${en('0')}</td>
        <td>${en('I.自编 : HTSTRA1 () 分笔 Tick级别刷新 使用300根K线数据计算')}</td></tr>`;
}).join('');

document.getElementById('records').innerHTML = '<tr><td></td><td></td><td></td><td></td></tr>'.repeat(12);

// message log
document.getElementById('log').textContent = ['SP00', 'SA00', 'FU00', 'RM00', 'AG00', 'FG00', 'RU00', 'SRX00', 'MA00', 'OI00', 'V00', 'M00']
    .map(code => `2025/03/19 14:59:17  ${code} 0 0`).join('\n');

// quote chart
const dotted = [59, 145, 230, 316, 407, 432, 605]
    .map(y => `<path d="M1 ${y}.5H1350" stroke="#a00000" stroke-dasharray="1 4" />`).join('');
const solid = [348, 366, 466, 566]
    .map(y => `<path d="M1 ${y}.5H1344" stroke="#b00000" />`).join('');

const ticks = [
    ['zr', 25, [[974, 977], [980, 986], [989, 1050], [1055, 1059], [1062, 1070]]],
    ['zr', 59, [[1137, 1143]]],
    ['zc', 93, [[1105, 1114], [1143, 1169]]],
    ['zr', 93, [[1116, 1119], [1122, 1137], [1172, 1186], [1238, 1241], [1244, 1250], [1256, 1262], [1265, 1268], [1276, 1285], [1291, 1295], [1297, 1300], [1302, 1308], [1314, 1334], [1337, 1340]]],
    ['zc', 127, [[1113, 1116], [1119, 1122], [1169, 1172], [1241, 1244], [1250, 1256], [1262, 1276], [1285, 1291], [1294, 1297], [1299, 1302], [1308, 1314], [1334, 1337]]],
    ['zr', 127, [[1192, 1198], [1204, 1215], [1218, 1221], [1224, 1238]]],
    ['zc', 162, [[1186, 1192], [1198, 1204], [1215, 1218], [1221, 1224]]],
    ['zr', 229, [[1, 7], [13, 27], [30, 34], [36, 39]]],
    ['zc', 264, [[7, 13], [15, 18], [27, 30], [33, 36], [39, 56]]],
    ['zr', 264, [[59, 65], [91, 94], [97, 100]]],
    ['zc', 298, [[56, 59], [65, 91], [94, 97], [100, 120]]]
].map(([fill, y, runs]) => runs.map(([a, b]) => `<rect x="${a}" y="${y}" width="${b - a}" height="2" fill="url(#${fill})" />`).join('')).join('');

document.getElementById('plot').innerHTML += dotted + solid + ticks + `
    <path d="M1344.5 2V667M2.500 349v16" stroke="#c00000" />
    <path d="M1343 93l5-6h10v13h-10z" fill="#fff" />
    <path d="M1050 33l16-8" stroke="#ddd" />
    <text x="1020" y="36" fill="#ccc" font-size="12">8962</text>
    <text x="4" y="361" fill="#c01010">03/19</text>
    <text x="4" y="379" fill="#fff">TICK_SIG(10,1000)</text>
    <text x="4" y="479" fill="#fff">SIG1</text>
    <text x="4" y="579" fill="#fff">VOL(5,10,20)</text>
    <path d="M2 445h6l5 4h16l6 4h14l1 2 3-7h6l5-5h14l3 8h6l6 5h27" stroke="#fff" />
    <path d="M38 556h4M49 556h4M116 556l3-4M2 632.500h118" stroke="#fff" />
    <path d="M2 557.500h118" stroke="#e000e0" />
    <path d="M2 658h4l4 1h6l6-1h14l10-4 10 2h10l8-6h8l10 2 12-1 6-2h12" stroke="#888" />
    <path d="M39 659v-8M50 659v-12M56 659v-5M62 659v-4M70 659v-5M76 659v-6M80 659v-4M84 659v-5M94 659v-4M106 659v-2M117 659v-14" stroke="#20c8c8" stroke-width="2" />
    <path d="M2 662v-8M27 660v-2M59 660v-3M100 660v-4" stroke="#e03030" stroke-width="2" />
    <path d="M2 655h34l12-4h12l12 2h20l5 4h20" stroke="#ffff00" />
    <path d="M2 657h36l20-2h12l6-1h18l4 3h20" stroke="#00f000" stroke-width="2" />`;

// one tile per logical processor
const idle = 'M70 55.500l2-1h10';
const loads = {
    0: 'M72 55l1-6 1 5 1-4 1 4 1-4 1 4 1-5 2 3 1-19 2 22',
    1: 'M69 55l1-24 2 4 1 18 2 2 1-20 2 4 1 16 3-1 3-2',
    2: 'M71 55l1-2 1 2h4l1-2 1 2',
    3: 'M69 55l1-13 2 11 2 0 1 2 3-1 6 0',
    8: 'M69 55l1-54.500h16V55',
    10: 'M69 55l1-54.500h16V55',
    16: idle,
    17: 'M69 55l2-5 3 3 3-2 3 4',
    18: 'M71 55l2-2 3 2 2-3 3 3',
    19: 'M70 54.500h8l1-3 1 3h3',
    20: 'M71 55h4M78 55l2-1 2 1 1-2',
    21: 'M69 55l1-3 3 2h10',
    22: 'M70 54.500h5M82 55l1-2',
    23: idle,
    24: 'M70 55h2',
    25: 'M70 55h3M78 55h3',
    26: 'M70 55h3M77 55h6',
    27: 'M70 54.500h12',
    28: 'M71 55h3l2-2 2 2 3-4 2 4',
    29: 'M70 54l2-1 2 1 2-1 2 1 6-1',
    30: 'M69 53l3 1.500h12',
    31: idle
};

let cores = '';
for (let i = 0; i < 32; i++) {
    cores += '<svg><path class="rule" d="M14.500 0v56M28.500 0v56M43.500 0v56M57.500 0v56M72.500 0v56M0 11.500h86M0 22.500h86M0 33.500h86M0 44.500h86" />';
    cores += loads[i] ? `<path class="load" d="${loads[i]}" /></svg>` : '</svg>';
}
document.getElementById('cores').innerHTML = cores;
```
